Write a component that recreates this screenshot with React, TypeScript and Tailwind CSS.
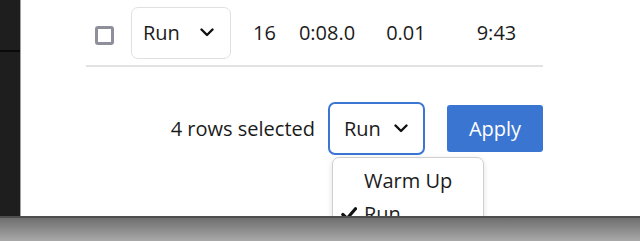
import React from "react";

function Chevron() {
  return (
    <svg width="14" height="9" viewBox="0 0 14 9" fill="none">
      <polyline points="1.5,1.5 7,7 12.5,1.5" stroke="#111" strokeWidth="2.4" strokeLinecap="round" strokeLinejoin="round" />
    </svg>
  );
}

function Check() {
  return (
    <svg width="16" height="14" viewBox="0 0 16 14" fill="none">
      <polyline points="1.8,7.5 6,11.5 14.5,1.8" stroke="#111" strokeWidth="3.2" strokeLinecap="round" strokeLinejoin="round" />
    </svg>
  );
}

export default function App() {
  return (
    <div
      className="w-[640px] h-[241px] relative overflow-hidden flex flex-col bg-white text-[#1b1b1b]"
      style={{ fontFamily: '"Open Sans", "Noto Sans", sans-serif' }}
    >
      <div className="flex flex-1 min-h-0">
        <div className="w-[21px] shrink-0 bg-[#1e1e1e] border-r border-[#a0a0a0] flex flex-col">
          <div className="h-[50px]" />
          <div className="h-[2px] bg-[#0a0a0a]" />
        </div>
        <div className="flex-1 pl-[65px] pr-[97px]">
          <div className="flex items-center h-[67px] pt-[7px] pb-[7px] border-b-2 border-[#e2e2e2] text-[20px]">
            <div className="ml-[9px] w-[19px] h-[19px] mt-[5px] rounded-[3px] border-[3px] border-[#8f8f9c] shrink-0" />
            <div className="ml-[17px] w-[100px] h-[52px] rounded-[7px] border border-[#e0e0e0] flex items-center justify-between pl-[11px] pr-[16px]">
              <span>Run</span>
              <Chevron />
            </div>
            <span className="ml-[22px]">16</span>
            <span className="ml-[23px]">0:08.0</span>
            <span className="ml-[31px]">0.01</span>
            <span className="ml-[51px]">9:43</span>
          </div>
          <div className="flex items-center justify-end mt-[35px] text-[20px]">
            <span>4 rows selected</span>
            <div className="relative ml-[13px]">
              <div className="w-[97px] h-[53px] rounded-[7px] border-2 border-[#3a76d2] flex items-center justify-between pl-[14px] pr-[15px]">
                <span>Run</span>
                <Chevron />
              </div>
              <div className="absolute left-[4px] top-[55px] w-[152px] h-[80px] rounded-[7px] border border-[#cfcfcf] bg-white shadow-[0_2px_6px_rgba(0,0,0,0.12)] pt-[6px] z-10">
                <div className="h-[33px] flex items-center pl-[31px]">Warm Up</div>
                <div className="h-[33px] flex items-center pl-[8px]">
                  <span className="w-[23px] flex items-center"><Check /></span>
                  <span>Run</span>
                </div>
              </div>
            </div>
            <div className="ml-[22px] w-[96px] h-[47px] rounded-[3px] bg-[#3a75d1] text-white flex items-center justify-center">
              Apply
            </div>
          </div>
        </div>
      </div>
      <div className="h-[25px] shrink-0 relative z-20 border-t-2 border-[#4d4d4d] bg-gradient-to-b from-[#6f6f6f] to-[#a9a9a9]" />
    </div>
  );
}
